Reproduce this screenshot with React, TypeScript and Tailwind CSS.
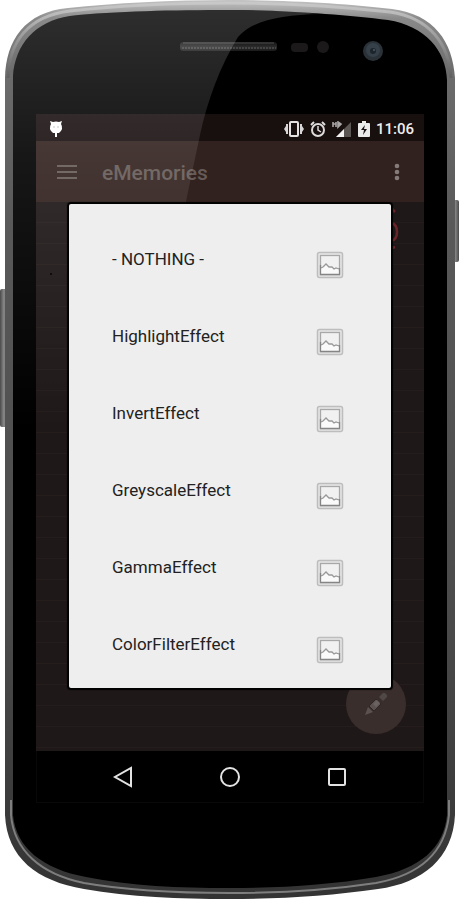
const EFFECTS = [
  "- NOTHING -",
  "HighlightEffect",
  "InvertEffect",
  "GreyscaleEffect",
  "GammaEffect",
  "ColorFilterEffect",
];

function PhoneFrame() {
  return (
    <svg
      className="absolute inset-0 h-full w-full"
      viewBox="0 0 459 900"
      preserveAspectRatio="none"
      aria-hidden="true"
    >
      <defs>
        <linearGradient id="metal" x1="0" y1="0" x2="0" y2="1">
          <stop offset="0" stopColor="#c4c4c4" />
          <stop offset="0.02" stopColor="#8a8a8a" />
          <stop offset="0.08" stopColor="#6c6c6c" />
          <stop offset="0.25" stopColor="#595959" />
          <stop offset="0.7" stopColor="#4a4a4a" />
          <stop offset="1" stopColor="#333333" />
        </linearGradient>
        <linearGradient id="rim" x1="0" y1="0" x2="0" y2="1">
          <stop offset="0" stopColor="#c8c8c8" />
          <stop offset="0.6" stopColor="#8e8e8e" />
          <stop offset="1" stopColor="#5e5e5e" />
        </linearGradient>
        <linearGradient id="button" x1="0" y1="0" x2="1" y2="0">
          <stop offset="0" stopColor="#4a4a4a" />
          <stop offset="0.5" stopColor="#8a8a8a" />
          <stop offset="1" stopColor="#4a4a4a" />
        </linearGradient>
        <linearGradient id="speaker" x1="0" y1="0" x2="0" y2="1">
          <stop offset="0" stopColor="#111" />
          <stop offset="0.55" stopColor="#2c2c2c" />
          <stop offset="1" stopColor="#151515" />
        </linearGradient>
      </defs>

      {/* side keys */}
      <rect x="0" y="289" width="8" height="138" rx="2" fill="url(#button)" />
      <rect x="451" y="200" width="8" height="62" rx="2" fill="url(#button)" />

      {/* metal rim */}
      <path
        d="M5 78C6 40 25 12 68 8C115 3 170 0 229 0C290 0 350 4 392 9C434 14 453 42 455 78V815C453 858 423 883 378 889C330 896 280 899 229 899C180 899 130 897 84 889C37 881 7 858 5 815Z"
        fill="url(#metal)"
      />
      <path
        d="M8 78C9 42 28 16 70 11C115 6 170 3 229 3C290 3 345 7 390 12C430 18 449 44 451 78"
        fill="none"
        stroke="url(#rim)"
        strokeWidth="3"
      />
      <path
        d="M11 800V815C14 850 40 874 84 883C130 891 180 893 229 893C280 893 330 890 376 883C420 875 445 852 449 815V800"
        fill="none"
        stroke="#7e7e7e"
        strokeWidth="2"
      />

      {/* glass */}
      <path
        d="M13 76C15 45 35 21 70 16C115 11 175 10 229 10C285 10 345 15 388 20C425 26 446 50 447 80V815C444 848 420 869 376 877C330 885 280 888 229 888C180 888 130 886 86 877C43 869 16 848 13 815Z"
        fill="#000"
      />

      {/* speaker grille */}
      <rect x="179" y="41" width="99" height="11" rx="4" fill="url(#speaker)" stroke="#000" strokeWidth="2" />
      <path d="M183 43H274" stroke="#4c4c4c" strokeWidth="1" />
      <path d="M182 48H276" stroke="#454545" strokeWidth="2" strokeDasharray="2 1" />

      {/* sensors and camera */}
      <rect x="291" y="43" width="17" height="9" rx="4" fill="#1b1919" />
      <circle cx="323" cy="47" r="6" fill="#1b1919" />
      <circle cx="373" cy="51" r="10" fill="#2a3238" />
      <circle cx="373" cy="50" r="7" fill="#354049" />
      <circle cx="373" cy="51" r="3" fill="#1d252c" />
      <circle cx="374" cy="50" r="1" fill="#4d5a66" />
    </svg>
  );
}

// reflection across the left side of the glass
function Gloss() {
  return (
    <svg
      className="pointer-events-none absolute inset-0 h-full w-full"
      viewBox="0 0 459 900"
      preserveAspectRatio="none"
      aria-hidden="true"
    >
      <defs>
        <linearGradient id="gloss" x1="0" y1="0" x2="0" y2="1">
          <stop offset="0" stopColor="#fff" stopOpacity="0.18" />
          <stop offset="0.35" stopColor="#fff" stopOpacity="0.09" />
          <stop offset="1" stopColor="#fff" stopOpacity="0" />
        </linearGradient>
      </defs>
      <path
        d="M13 76C15 45 35 21 70 16C115 11 175 10 229 10C270 10 300 12 320 14C282 15 253 20 238 37C220 66 207 102 200 135C185 205 165 300 145 430H13Z"
        fill="url(#gloss)"
      />
    </svg>
  );
}

function BugDroidIcon() {
  return (
    <svg className="h-5 w-4" viewBox="0 0 16 20" fill="#fff" aria-hidden="true">
      <path d="M2 2L5 3Q8 2 11 3L14 2L13 5Q16 10 11 14L9 14V18H7V14L5 14Q0 10 3 5Z" />
      <circle cx="6" cy="8" r="0.7" fill="#aaa" />
      <circle cx="10" cy="8" r="0.7" fill="#aaa" />
    </svg>
  );
}

function VibrateIcon() {
  return (
    <svg className="h-4 w-5" viewBox="0 0 20 16" aria-hidden="true">
      <rect x="6" y="1" width="8" height="14" rx="1" fill="none" stroke="#e4e2e2" strokeWidth="2" />
      <path d="M4 3V13H2V11L0 8L2 5V3ZM16 3V13H18V11L20 8L18 5V3Z" fill="#d8d6d6" />
    </svg>
  );
}

function AlarmIcon() {
  return (
    <svg className="h-4 w-4" viewBox="0 0 16 16" fill="none" stroke="#dddbdb" strokeWidth="2" aria-hidden="true">
      <circle cx="8" cy="9" r="6" />
      <path d="M8 5V9L11 11" strokeWidth="1.5" />
      <path d="M1 4L4 1M15 4L12 1" />
    </svg>
  );
}

function SignalIcon() {
  return (
    <svg className="h-4 w-5" viewBox="0 0 20 16" aria-hidden="true">
      <path d="M19 1V16H4Z" fill="#5c5655" />
      <path d="M12 8V16H4Z" fill="#f4f4f4" />
      <path d="M1 1V6M1 3H4M4 1V6M6 1L9 3L6 6Z" fill="#aaa7a7" stroke="#aaa7a7" strokeWidth="1.6" />
    </svg>
  );
}

function BatteryIcon() {
  return (
    <svg className="h-4 w-3" viewBox="0 0 12 16" aria-hidden="true">
      <path d="M4 0H8V2H11Q12 2 12 3V15Q12 16 11 16H1Q0 16 0 15V3Q0 2 1 2H4Z" fill="#ececec" />
      <path d="M7 4L3 9H6L5 14L9 8H6Z" fill="#1a1212" />
    </svg>
  );
}

function PictureIcon() {
  return (
    <svg className="h-7 w-7 shrink-0" viewBox="0 0 28 28" aria-hidden="true">
      <rect x="1.5" y="1.5" width="25" height="25" rx="2" fill="#e6e6e6" stroke="#bdbdbd" strokeWidth="1.5" />
      <rect x="4.5" y="4.5" width="19" height="19" fill="#f1f1f1" stroke="#a8a8a8" strokeWidth="1.3" />
      <path d="M5 17L7 16L10 13L13 16L16 16L18 18L20 17L23 18V23H5Z" fill="#fafafa" />
      <path d="M5 17L7 16L10 13L13 16L16 16L18 18L20 17L23 18" fill="none" stroke="#999" strokeWidth="1.3" />
      <path d="M4.5 14V23.5H23.5V17" fill="none" stroke="#858585" strokeWidth="1.3" />
    </svg>
  );
}

function PencilIcon() {
  return (
    <svg className="h-6 w-6" viewBox="0 0 24 24" fill="#5b5250" aria-hidden="true">
      <path d="M1 23L4 15L9 20Z" />
      <path d="M5 14L12 7L17 12L10 19Z" stroke="#2f2726" strokeWidth="1" />
      <path d="M9 12L13 8L16 11L12 15Z" fill="#6a6260" />
      <path d="M15 5L19 1Q20 0 22 2T23 5L19 9Z" fill="#504846" />
    </svg>
  );
}

function StatusBar() {
  return (
    <div className="flex h-[27px] items-center bg-[#180f0f] pt-0.5 pr-2.5 pl-3">
      <BugDroidIcon />
      <div className="ml-auto flex items-center gap-1.5">
        <VibrateIcon />
        <AlarmIcon />
        <SignalIcon />
        <BatteryIcon />
        <span className="text-[15px] leading-5 font-medium text-[#f0eeee]">11:06</span>
      </div>
    </div>
  );
}

function Toolbar() {
  return (
    <header className="flex h-[61px] items-center bg-[#32221f] pr-4 pl-5 text-[#665b57]">
      <button type="button" aria-label="Open menu">
        <svg className="h-5 w-[22px]" viewBox="0 0 22 20" stroke="currentColor" strokeWidth="2">
          <path d="M1 4H21M1 10H21M1 16H21" />
        </svg>
      </button>
      <h1 className="ml-6 pt-0.5 text-[21px] leading-7 font-medium">eMemories</h1>
      <button type="button" aria-label="More options" className="ml-auto text-[#857b79]">
        <svg className="h-6 w-6" viewBox="0 0 24 24" fill="currentColor">
          <circle cx="13" cy="6" r="2.3" />
          <circle cx="13" cy="12" r="2.3" />
          <circle cx="13" cy="18" r="2.3" />
        </svg>
      </button>
    </header>
  );
}

function EffectDialog() {
  return (
    <div
      role="dialog"
      aria-label="Choose an effect"
      className="relative z-10 mx-[33px] mt-0.5 mb-[63px] rounded-xs bg-[#eeeeee] pt-[22px] shadow-[0_0_1px_2px_#000]"
    >
      <ul>
        {EFFECTS.map((effect) => (
          <li key={effect}>
            <button
              type="button"
              className="flex h-[77px] w-full items-center justify-between pr-[47px] pl-[43px] text-left"
            >
              <span className="pb-3 text-[17px] leading-6 text-[#222]">{effect}</span>
              <PictureIcon />
            </button>
          </li>
        ))}
      </ul>
    </div>
  );
}

function NavBar() {
  return (
    <nav className="flex h-[52px] items-center justify-center gap-[83px] border border-t-0 border-[#080808] bg-black">
      <button type="button" aria-label="Back">
        <svg className="h-6 w-6" viewBox="0 0 24 24" fill="none" stroke="#e3e3e3" strokeWidth="2">
          <path d="M20 3V21L4 12Z" />
        </svg>
      </button>
      <button type="button" aria-label="Home">
        <svg className="h-6 w-6" viewBox="0 0 24 24" fill="none" stroke="#e3e3e3" strokeWidth="2">
          <circle cx="12" cy="12" r="9" />
        </svg>
      </button>
      <button type="button" aria-label="Recent apps">
        <svg className="h-6 w-6" viewBox="0 0 24 24" fill="none" stroke="#e3e3e3" strokeWidth="2">
          <rect x="4" y="4" width="16" height="16" rx="1" />
        </svg>
      </button>
    </nav>
  );
}

export default function App() {
  return (
    <div className="relative isolate min-h-screen bg-white pt-[114px] pr-[35px] pb-[97px] pl-9 font-[Roboto,sans-serif]">
      <PhoneFrame />
      <div className="relative">
        <StatusBar />
        <Toolbar />
        <main className="relative flow-root bg-[#1f1818] bg-[repeating-linear-gradient(#1f1818_0px,#1f1818_20px,#241d1c_20px,#241d1c_21px)]">
          {/* date column of the page under the dialog */}
          <svg
            className="absolute top-1 right-6 h-12 w-3"
            viewBox="0 0 12 48"
            fill="none"
            stroke="#6b2529"
            strokeWidth="2.5"
            aria-hidden="true"
          >
            <path d="M3 2L7 6M3 17Q9 18 9 26T3 35M4 42L7 41" />
          </svg>
          <span className="absolute top-[71px] left-3.5 h-0.5 w-0.5 bg-black" />
          <EffectDialog />
          <button
            type="button"
            aria-label="Edit"
            className="absolute right-[18px] bottom-[17px] flex h-[60px] w-[60px] items-center justify-center rounded-full bg-[#3a2e2c]"
          >
            <PencilIcon />
          </button>
        </main>
        <NavBar />
      </div>
      <Gloss />
    </div>
  );
}
